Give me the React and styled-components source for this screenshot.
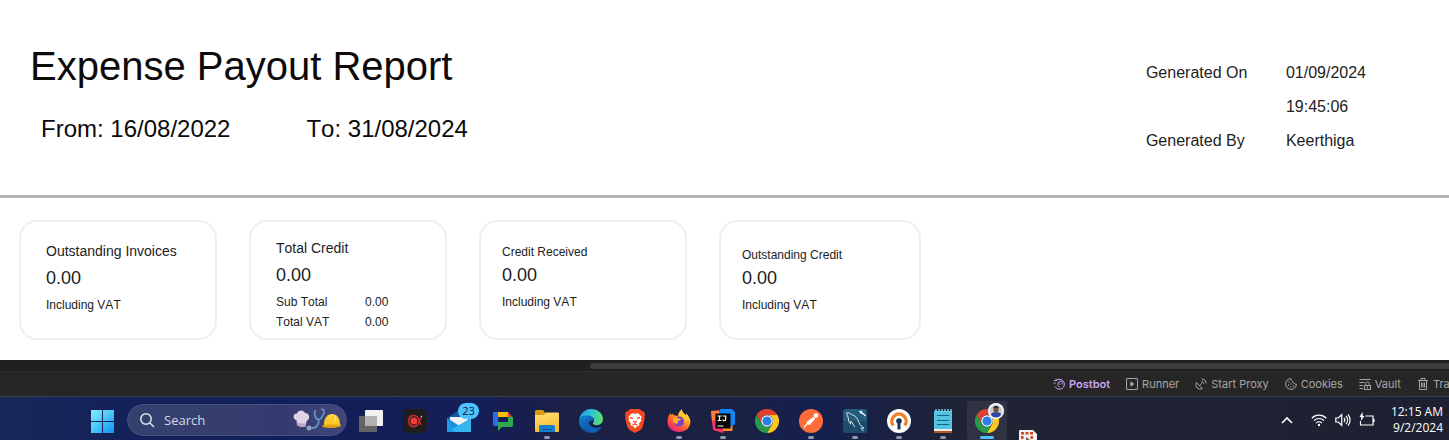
import React from 'react'
import styled, { createGlobalStyle } from 'styled-components';

const cards = [
  { title: 'Outstanding Invoices', value: '0.00', note: 'Including VAT', width: 198, top: 19, left: 25 },
  { title: 'Total Credit', value: '0.00', width: 198, top: 16, left: 25,
    rows: [['Sub Total', '0.00'], ['Total VAT', '0.00']] },
  { title: 'Credit Received', value: '0.00', note: 'Including VAT', width: 208, top: 20, left: 21, compact: true },
  { title: 'Outstanding Credit', value: '0.00', note: 'Including VAT', width: 202, top: 23, left: 21, compact: true },
]

const PostbotIcon = () => (
  <ToolIcon viewBox="0 0 12 12">
    <path d="M3.2 2.4A5 5 0 1 1 2 8.6M.8 2.2l2.4.4M.6 5h2M2.6.8l1.5 1.4M5 5.2a3 3 0 0 1 5-.8M5 5.2c-.6 1.6 0 3.2 1.6 4M7 5.4l.2 1.4M9.2 5l.2 1.4" />
  </ToolIcon>
)

const RunnerIcon = () => (
  <ToolIcon viewBox="0 0 12 12">
    <rect x="0.5" y="0.5" width="11" height="11" rx="0.5" />
    <path d="M4.8 4v4l3-2z" fill="currentColor" />
  </ToolIcon>
)

const ProxyIcon = () => (
  <ToolIcon viewBox="0 0 12 12">
    <path d="M1.4 4.6a4.4 4.4 0 0 0 6 6zM4.4 7.6l2.4-2.4M6.4 3.4a2.4 2.4 0 0 1 2.2 2.2M6.6.8a5 5 0 0 1 4.6 4.6" />
  </ToolIcon>
)

const CookieIcon = () => (
  <ToolIcon viewBox="0 0 12 12">
    <path d="M6 .6a5.4 5.4 0 1 0 5.4 5.6c-1 .2-1.8-.4-2-1.2-1.2.2-2-.6-1.8-1.8C6.4 2.8 5.8 1.8 6 .6z" />
    <path d="M3.6 4h1M3 7h1M5.6 6h1M5.4 9h1M8 8h1" strokeWidth="1.4" />
  </ToolIcon>
)

const VaultIcon = () => (
  <ToolIcon viewBox="0 0 12 12">
    <path d="M.5 1.5h11M.5 4.5h5M.5 7.5h3.5M.5 10.5h3.5" />
    <rect x="5.5" y="7.5" width="6" height="4" />
    <path d="M6.8 7V5.600a1.700 1.700 0 0 1 3.400 0V7M8.500 8.500v2" />
  </ToolIcon>
)

const TrashIcon = () => (
  <ToolIcon viewBox="0 0 12 12">
    <path d="M1 2.500h10M4 2.500v-2h4v2M2.500 2.500v9h7v-9M4.500 4.500v5M6 4.500v5M7.500 4.500v5" />
  </ToolIcon>
)

const tools = [
  { label: 'Postbot', icon: <PostbotIcon />, accent: true },
  { label: 'Runner', icon: <RunnerIcon /> },
  { label: 'Start Proxy', icon: <ProxyIcon /> },
  { label: 'Cookies', icon: <CookieIcon /> },
  { label: 'Vault', icon: <VaultIcon /> },
  { label: 'Trash', icon: <TrashIcon /> },
]

const WindowsLogo = () => (
  <AppIcon viewBox="0 0 24 24">
    <defs>
      <linearGradient id="win" x1="0" y1="0" x2="24" y2="24" gradientUnits="userSpaceOnUse">
        <stop offset="0" stopColor="#8cf0fd" />
        <stop offset="0.5" stopColor="#4cc8f8" />
        <stop offset="1" stopColor="#0a92f5" />
      </linearGradient>
    </defs>
    <path fill="url(#win)" d="M1 1h11v11H1zM13 1h11v11H13zM1 13h11v11H1zM13 13h11v11H13z" />
  </AppIcon>
)

const TaskViewIcon = () => (
  <AppIcon viewBox="0 0 24 24">
    <rect x="0" y="7" width="18" height="16" rx="1" fill="#636466" />
    <rect x="6" y="1" width="18" height="16" rx="1" fill="#f1f1f1" />
    <path d="M6 7h12v10H7a1 1 0 0 1-1-1z" fill="#b2b2b3" />
  </AppIcon>
)

const RecorderIcon = () => (
  <AppIcon viewBox="0 0 24 24">
    <rect width="24" height="24" rx="4.5" fill="#1d1d1f" />
    <path d="M4 14.500c2 3 5.500 4.500 9 3.500M4 9.500C6 6.500 9 5.500 12 6.200" stroke="#8c2323" fill="none" />
    <circle cx="11" cy="12" r="5.300" fill="none" stroke="#e5322f" strokeWidth="1.300" />
    <circle cx="11" cy="12" r="3.500" fill="#f03b38" />
    <path d="M18.500 8.500c-2.500 2-2.500 5 0 7.500" fill="none" stroke="#d92f2d" strokeWidth="1.300" />
    <circle cx="18.500" cy="7.500" r="0.800" fill="#ddd" />
  </AppIcon>
)

const MailIcon = () => (
  <AppIcon viewBox="0 0 24 24">
    <path d="M0 9l12-8 12 8v5H0z" fill="#0c59a4" />
    <path d="M3 8h18v6l-9 5-9-5z" fill="#f1f3f5" />
    <path d="M0 9l15 9.500L24 23H0z" fill="#1a8fe0" />
    <path d="M24 9v14L0 23z" fill="#35b5f0" />
    <path d="M0 9v14h7z" fill="#1f9be6" />
  </AppIcon>
)

const ChatIcon = () => (
  <AppIcon viewBox="0 0 24 24">
    <path d="M3 3h4v14H4a2 2 0 0 1-2-2V4a1 1 0 0 1 1-1z" fill="#2b6de8" />
    <path d="M7 3h10v5H7z" fill="#fbbc04" />
    <path d="M17 3l4.500 5H17z" fill="#ea4335" />
    <path d="M17 8h5v8a2 2 0 0 1-2 2h-9l-4 4v-9h10z" fill="#2fa84f" />
  </AppIcon>
)

const ExplorerIcon = () => (
  <AppIcon viewBox="0 0 24 24">
    <defs>
      <linearGradient id="folder" x1="0" y1="0" x2="0.300" y2="1">
        <stop offset="0" stopColor="#ffe079" />
        <stop offset="1" stopColor="#f9bd2f" />
      </linearGradient>
    </defs>
    <path d="M0 2.500A1.500 1.500 0 0 1 1.500 1H8l2.500 3H22v6H0z" fill="#dc9a10" />
    <path d="M0 6h9l2-2.500h12a1 1 0 0 1 1 1V22a1 1 0 0 1-1 1H1a1 1 0 0 1-1-1z" fill="url(#folder)" />
    <path d="M4 23v-5.500A1.500 1.500 0 0 1 5.500 16h13a1.500 1.500 0 0 1 1.500 1.500V23z" fill="#1680d0" />
    <path d="M7.500 20h9v1.200h-9z" fill="#0c5a9c" />
  </AppIcon>
)

const EdgeIcon = () => (
  <AppIcon viewBox="0 0 24 24">
    <defs>
      <linearGradient id="edgeTop" x1="0" y1="0.300" x2="1" y2="0.500">
        <stop offset="0" stopColor="#1b9de2" />
        <stop offset="0.500" stopColor="#32c3d6" />
        <stop offset="1" stopColor="#5fdd69" />
      </linearGradient>
      <linearGradient id="edgeBody" x1="0" y1="0" x2="0.500" y2="1">
        <stop offset="0" stopColor="#1385d8" />
        <stop offset="1" stopColor="#0b4a9c" />
      </linearGradient>
    </defs>
    <path d="M.2 10.500C1 4.500 6 0 12 0c7 0 12 4.800 12 10 0 4-3 6.200-6.300 6.200-2.500 0-3.900-.9-3.900-1.900 0-.7 1.200-1.200 1.200-3C15 8.500 12 6.800 8.500 6.800 4.500 6.800 1.500 8.500.2 10.500z" fill="url(#edgeTop)" />
    <path d="M.1 11.500C.5 8 4.500 6.600 8.500 6.800c3.500.2 6.400 2 6.500 4.500-3-.6-5.700 1.200-5.700 4.400 0 4.300 4.200 7.300 9.200 6C16 23.400 14 24 12 24 5.400 24-.4 18.600.1 11.500z" fill="url(#edgeBody)" />
    <path d="M8.800 9.500c-2.800 1.600-3.300 4.500-2.800 7.200.9 4.200 4.500 6.900 8.500 7 3-.4 6-2.200 7.800-5.200.3-.6-.2-1-.8-.7-4.500 2.200-10.500.3-11.500-3.600-.5-1.900.2-3.500 1.400-4.700z" fill="#125fb7" />
  </AppIcon>
)

const BraveIcon = () => (
  <AppIcon viewBox="0 0 24 24">
    <path d="M7 0h10l2.200 2.500 1.500-.2 1.300 3-.6 2 .4 2-2.300 9.200-2.500 2.800L12 24l-5-2.700-2.500-2.800L2.200 9.300l.4-2-.6-2 1.300-3 1.500.2z" fill="#f4481e" />
    <path d="M12 4.800l3-.5 3.500 3.300-.6 2.800.6 1-2.500 3.100.5 1.800-2.500.9L12 19.500l-2-2.300-2.500-.9.500-1.800-2.500-3.100.6-1-.6-2.800L9 4.300z" fill="#fff" />
    <path d="M7 8.500l3 .8M17 8.500l-3 .8M10.200 12L12 13.200l1.800-1.200M12 13v2M9.500 16l2.500-1.200 2.500 1.200" stroke="#f4481e" strokeWidth="1.300" fill="none" />
  </AppIcon>
)

const FirefoxIcon = () => (
  <AppIcon viewBox="0 0 24 24">
    <defs>
      <linearGradient id="fox" x1="0.850" y1="0.050" x2="0.250" y2="1">
        <stop offset="0" stopColor="#fff04a" />
        <stop offset="0.350" stopColor="#ffae24" />
        <stop offset="0.650" stopColor="#ff5638" />
        <stop offset="1" stopColor="#e51f81" />
      </linearGradient>
    </defs>
    <path d="M2.500 5.500l1-1.500.5 2 2-1.600.4 1.800c1.600-.2 3 .1 4.400 1C11.200 4 13.500 1 15 .3c0 3 2 4 3.700 5.700l.6-1.600C22 7 23.500 10 23.400 13 23 19.600 18 23 12 23 5.500 23 .5 19 .5 12.800.4 9.500 1.500 7 2.500 5.500z" fill="url(#fox)" />
    <circle cx="12" cy="12.500" r="5" fill="#7543c7" />
    <path d="M6 10c2-2 4.200-1.700 5.800-.5l2.200.5c-.5 1.500-2.500 1.500-3 2-.8.8-.3 1.700.5 2.200-2 1.200-4.500 0-5.500-1.700z" fill="#ffac29" />
    <path d="M13.500 6c3.500 1 5.500 4.500 4.500 8 2-1.500 2.500-5 1-7.500z" fill="#ffd43a" opacity="0.600" />
  </AppIcon>
)

const IdeaIcon = () => (
  <AppIcon viewBox="0 0 24 24">
    <path d="M0 2l8-.5L14 6v12l-2 6-10-3z" fill="#fd3365" />
    <path d="M0 2l8-.5 1 8L1 12z" fill="#ff7d3c" />
    <path d="M9 0h12l3 3v12l-7 5L8 6z" fill="#1385f5" />
    <path d="M12 17h9.500v5H12z" fill="#ff8a31" />
    <path d="M4.500 4.500h15v15h-15z" fill="#050505" />
    <path d="M6.500 7h4M6.500 11.500h4M8.500 7v4.500M11.500 7h3.200v3a1.500 1.500 0 0 1-3 .5M6.500 17h6" stroke="#fff" strokeWidth="1.200" fill="none" />
  </AppIcon>
)

const ChromeIcon = () => (
  <AppIcon viewBox="0 0 24 24">
    <path d="M1.600 6A12 12 0 0 1 22.400 6H12A6 6 0 0 0 6.800 15z" fill="#e0402f" />
    <path d="M22.400 6A12 12 0 0 1 12 24l5.200-9A6 6 0 0 0 12 6z" fill="#fcc81f" />
    <path d="M12 24A12 12 0 0 1 1.600 6l5.200 9a6 6 0 0 0 10.400 0z" fill="#279a4a" />
    <circle cx="12" cy="12" r="5.800" fill="#fff" />
    <circle cx="12" cy="12" r="4.600" fill="#2b7de9" />
  </AppIcon>
)

const PostmanIcon = () => (
  <AppIcon viewBox="0 0 24 24">
    <circle cx="12" cy="12" r="12" fill="#ff6c37" />
    <circle cx="17" cy="6.500" r="2.300" fill="#fff" />
    <path d="M14.300 7.700l2 2-5.500 6-2.500-.4-.8-2z" fill="#fff" />
    <path d="M8.500 14.500L5 18.500M14 11l-4 4.500" stroke="#fff" strokeWidth="1.200" />
  </AppIcon>
)

const WorkbenchIcon = () => (
  <AppIcon viewBox="0 0 24 24">
    <rect width="24" height="24" rx="2.500" fill="#255c7c" />
    <path d="M0 12h24v9.500a2.500 2.500 0 0 1-2.500 2.500h-19A2.500 2.500 0 0 1 0 21.500z" fill="#1c4c69" />
    <path d="M3.500 4c2-1 3.500.5 5 1.500 4 1 6 4 7.500 8 .8 2.500 2.500 4 5 5.500l-3 .2 2.500 3M3.500 4c.2 2 1.500 3 1.800 5 .3 2.500.5 5 2.200 6l.5-3c1.500 2 2 4 4 6" fill="none" stroke="#d7e5ed" strokeWidth="1" />
    <path d="M16.500 2l1.500 2 2 .5 2.500 2.500M18 4l1-2" stroke="#fff" strokeWidth="1.300" fill="none" />
  </AppIcon>
)

const VpnIcon = () => (
  <AppIcon viewBox="0 0 24 24">
    <circle cx="12" cy="12" r="12" fill="#fff" />
    <path d="M6.200 16.500A7.200 7.200 0 1 1 17.800 16.500" fill="none" stroke="#ee8027" strokeWidth="3.400" />
    <circle cx="12" cy="12" r="2.800" fill="#19335c" />
    <path d="M10.500 13h3v7.500h-3z" fill="#19335c" />
  </AppIcon>
)

const NotepadIcon = () => (
  <AppIcon viewBox="0 0 24 24">
    <path d="M3 20h18v3a1 1 0 0 1-1 1H4a1 1 0 0 1-1-1z" fill="#b5541c" />
    <path d="M3 19.500h18V22H3z" fill="#f1eee9" />
    <path d="M3 2h18v18H3z" fill="#55c3df" />
    <path d="M5 0v3M8 0v3M11 0v3M14 0v3M17 0v3M20 0v3" stroke="#7cdcf1" strokeWidth="1.300" />
    <path d="M6 6.500h12M6 11.500h12M6 15.500h12" stroke="#0f6584" strokeWidth="1.200" />
  </AppIcon>
)

const Avatar = () => (
  <AvatarIcon viewBox="0 0 16 16">
    <circle cx="8" cy="8" r="8" fill="#fff" />
    <circle cx="8" cy="8" r="6.500" fill="#c6cbd6" />
    <path d="M2.600 11.500C4 9.500 6 9.300 8 9.300s4 .2 5.400 2.200A6.500 6.500 0 0 1 8 14.500a6.500 6.500 0 0 1-5.400-3z" fill="#2747a5" />
    <ellipse cx="8" cy="6.500" rx="2.600" ry="3.300" fill="#7b4f3c" />
    <path d="M5.200 5.500C5 2 11 2 10.800 5.500 9.500 4.300 6.500 4.300 5.200 5.500z" fill="#17141a" />
  </AvatarIcon>
)

const SearchArt = () => (
  <Art viewBox="0 0 48 24">
    <path d="M4 17l-.5-5C-.5 11.500-.5 5.500 4 5.500 5 1.500 11 1.500 12 5c5 0 5.500 6.500 1.500 8l-.5 5c-3 1.500-6.500 1-9-1z" fill="#e0d3e7" />
    <path d="M4 17l-.3-3c3 1.500 6.500 2 9.500 1l-.3 3c-3 1.500-6.400 1-8.900-1z" fill="#b9a6cb" />
    <path d="M23 2.500c-2 .5-1.500 3-1 5s2 4 3.800 4.300C28.500 11 31 6 31 3.500 31 1.500 29.500 1 28 1.500M25.800 12c0 5-2.500 8.500-8 8" fill="none" stroke="#6298c8" strokeWidth="1.700" />
    <circle cx="16" cy="20" r="2.500" fill="#8aa2b2" />
    <path d="M31 17C31 10 34 6 39 6c5 0 8 4 8 10.500l1 1.300c-1.500 1.700-14.500 2.200-18.500 1z" fill="#fbc82c" />
    <path d="M29.500 17.500c5-1.500 13-1.300 18.500 0-1 2.500-15 3-18.500 1.300z" fill="#e2a20e" />
    <path d="M36.500 10c.5-2.500 1.500-3 3-3.200M41 7c1.500 2 2 4 2 7" stroke="#ffe46c" strokeWidth="1.300" fill="none" />
  </Art>
)

const apps = [
  { name: 'Task view', icon: <TaskViewIcon /> },
  { name: 'Recorder', icon: <RecorderIcon /> },
  { name: 'Mail', icon: <MailIcon />, badge: '23' },
  { name: 'Chat', icon: <ChatIcon /> },
  { name: 'File Explorer', icon: <ExplorerIcon />, open: true },
  { name: 'Edge', icon: <EdgeIcon /> },
  { name: 'Brave', icon: <BraveIcon /> },
  { name: 'Firefox', icon: <FirefoxIcon />, open: true },
  { name: 'IntelliJ IDEA', icon: <IdeaIcon />, open: true },
  { name: 'Chrome', icon: <ChromeIcon /> },
  { name: 'Postman', icon: <PostmanIcon />, open: true },
  { name: 'MySQL Workbench', icon: <WorkbenchIcon />, open: true },
  { name: 'OpenVPN', icon: <VpnIcon />, open: true },
  { name: 'Notepad', icon: <NotepadIcon />, open: true },
  { name: 'Chrome profile', icon: <ChromeIcon />, open: true, active: true },
]

const Card = ({ title, value, note, rows, width, top, left, compact }) => (
  <CardWrapper $width={width} $top={top} $left={left}>
    <CardTitle $compact={compact}>{title}</CardTitle>
    <CardValue>{value}</CardValue>
    {note && <CardNote>{note}</CardNote>}
    {rows && (
      <Breakdown>
        {rows.map(([name, amount]) => (
          <React.Fragment key={name}>
            <dt>{name}</dt>
            <dd>{amount}</dd>
          </React.Fragment>
        ))}
      </Breakdown>
    )}
  </CardWrapper>
)

export default function App() {
  return (
    <>
      <GlobalStyle />
      <Report>
        <Header>
          <Heading>
            <Title>Expense Payout Report</Title>
            <Period>
              <span>From: 16/08/2022</span>
              <span>To: 31/08/2024</span>
            </Period>
          </Heading>
          <Meta>
            <dt>Generated On</dt>
            <dd>01/09/2024<br />19:45:06</dd>
            <dt>Generated By</dt>
            <dd>Keerthiga</dd>
          </Meta>
        </Header>
        <Cards>
          {cards.map(card => <Card key={card.title} {...card} />)}
        </Cards>
      </Report>
      <ScrollTrack><ScrollThumb /></ScrollTrack>
      <StatusBar>
        <Tools>
          {tools.map(({ label, icon, accent }) => (
            <Tool key={label} type="button" $accent={accent}>{icon}{label}</Tool>
          ))}
        </Tools>
      </StatusBar>
      <Taskbar>
        <AppButton type="button" aria-label="Start"><WindowsLogo /></AppButton>
        <SearchBox>
          <SearchGlyph viewBox="0 0 16 16">
            <circle cx="7" cy="7" r="5.200" />
            <path d="M11 11l4 4" />
          </SearchGlyph>
          <input type="text" placeholder="Search" aria-label="Search" />
          <SearchArt />
        </SearchBox>
        {apps.map(({ name, icon, badge, open, active }) => (
          <AppButton key={name} type="button" aria-label={name} $active={active}>
            {icon}
            {badge && <Badge>{badge}</Badge>}
            {active && <Avatar />}
            {open && <Indicator $active={active} />}
          </AppButton>
        ))}
        <SnipIcon viewBox="0 0 18 10">
          <path d="M0 1a1 1 0 0 1 1-1h13l4 4v6H0z" fill="#f2f2f2" />
          <path d="M2 2h3v2.500H2zM6.500 2h3v2.500h-3zM11 2h3v2.500h-3zM2 6h2.500v3H2zM11.500 6H14v3h-2.500z" fill="#d8431f" />
          <path d="M7 7l4 3H7z" fill="#666" />
        </SnipIcon>
        <Tray>
          <TrayButton type="button" aria-label="Hidden icons">
            <TrayIcon viewBox="0 0 16 16"><path d="M3 11l5-5 5 5" strokeWidth="1.600" /></TrayIcon>
          </TrayButton>
          <TrayGroup>
            <TrayIcon viewBox="0 0 16 16">
              <path d="M.8 6.200a10.200 10.200 0 0 1 14.400 0M3 8.600a7 7 0 0 1 10 0M5.200 11a4 4 0 0 1 5.600 0" />
              <circle cx="8" cy="13" r="1.200" fill="#fff" stroke="none" />
            </TrayIcon>
            <TrayIcon viewBox="0 0 16 16">
              <path d="M.8 6h2.400l3.500-3.300v10.600L3.200 10H.8zM9 6a3 3 0 0 1 0 4M11 4a6 6 0 0 1 0 8M13 2.300a9 9 0 0 1 0 11.400" />
            </TrayIcon>
            <TrayIcon viewBox="0 0 16 16">
              <path d="M6.500 4H14v9H1.500V9M15 7v3" />
              <path d="M3.500 0L.5 5h1.800L1.800 9 5.500 4H3.800z" fill="#fff" stroke="none" />
            </TrayIcon>
          </TrayGroup>
          <Clock>
            <span>12:15 AM</span>
            <span>9/2/2024</span>
          </Clock>
        </Tray>
      </Taskbar>
    </>
  )
}

const GlobalStyle = createGlobalStyle`
  * {
    box-sizing: border-box;
  }
  body {
    margin: 0;
    background: #fff;
    font-family: "Liberation Sans", Arial, sans-serif;
  }
  h1, h2, p, dl, dd {
    margin: 0;
  }
  button, input {
    padding: 0;
    border: none;
    background: none;
    font-family: inherit;
  }
`;

const Report = styled.main`
  background: #fff;
  color: #0c0a0a;
  font-kerning: none;
`;

const Header = styled.header`
  display: flex;
  justify-content: space-between;
  padding: 42px 83px 0 30px;
  border-bottom: 3px solid #b3b3b3;
`;

const Heading = styled.div`
  padding-bottom: 51px;
`;

const Title = styled.h1`
  font-size: 40px;
  line-height: 48px;
  font-weight: 400;
`;

const Period = styled.div`
  display: flex;
  gap: 76px;
  margin-top: 24px;
  padding-left: 11px;
  font-size: 24px;
  line-height: 30px;
`;

const Meta = styled.dl`
  display: grid;
  grid-template-columns: 140px auto;
  align-content: start;
  padding-top: 14px;
  font-size: 16px;
  line-height: 34px;
  color: #222;
`;

const Cards = styled.section`
  display: flex;
  gap: 32px;
  padding: 22px 19px 20px;
`;

const CardWrapper = styled.article`
  width: ${props => props.$width}px;
  height: 120px;
  padding: ${props => props.$top}px 16px 0 ${props => props.$left}px;
  border: 2px solid #e9f1f4;
  border-radius: 18px;
  color: #222;
`;

const CardTitle = styled.h2`
  margin-bottom: ${props => props.$compact ? 1 : 5}px;
  font-size: ${props => props.$compact ? 12 : 14}px;
  line-height: 20px;
  font-weight: 400;
`;

const CardValue = styled.p`
  margin-bottom: 5px;
  font-size: 18px;
  line-height: 24px;
`;

const CardNote = styled.p`
  font-size: 12px;
  line-height: 20px;
`;

const Breakdown = styled.dl`
  display: grid;
  grid-template-columns: 89px auto;
  font-size: 12px;
  line-height: 20px;
`;

const ScrollTrack = styled.div`
  height: 11px;
  padding: 3px 0 2px 590px;
  background: #1f1f1f;
`;

const ScrollThumb = styled.div`
  height: 6px;
  border-radius: 3px 0 0 3px;
  background: #3d3d3d;
`;

const StatusBar = styled.div`
  display: flex;
  justify-content: flex-end;
  height: 25px;
  border-top: 1px solid #303030;
  background: #262626;
`;

const Tools = styled.div`
  display: flex;
  gap: 16px;
  width: 396px;
  overflow: hidden;
`;

const Tool = styled.button`
  display: flex;
  flex: none;
  align-items: center;
  gap: 4px;
  font-family: Inter, sans-serif;
  font-size: 11px;
  font-weight: ${props => props.$accent ? 600 : 400};
  color: ${props => props.$accent ? '#c8a5f5' : '#a6a6a6'};
`;

const ToolIcon = styled.svg`
  width: 12px;
  height: 12px;
  fill: none;
  stroke: currentColor;
`;

const Taskbar = styled.footer`
  position: relative;
  display: flex;
  height: 44px;
  padding: 0 6px 0 80px;
  border-top: 1px solid #3c414d;
  background: linear-gradient(90deg, #182858 0%, #13205a 10%, #141e58 33%, #1b2046 39%, #1b2140 50%, #14204f 56%, #1a2142 61%, #202435 67%, #1c2030 100%);
  font-family: "Open Sans", "Noto Sans", sans-serif;
  color: #fff;
`;

const AppButton = styled.button`
  position: relative;
  display: flex;
  flex: none;
  align-items: center;
  justify-content: center;
  width: 44px;
  padding-top: 4px;
  ${props => props.$active && `
    background: rgba(255, 255, 255, 0.07);
    background-clip: content-box;
    border-radius: 4px;
    padding: 4px 2px 0;
  `}
`;

const AppIcon = styled.svg`
  width: 24px;
  height: 24px;
`;

const Indicator = styled.span`
  position: absolute;
  bottom: 1px;
  left: 50%;
  width: ${props => props.$active ? 14 : 6}px;
  height: 3px;
  border-radius: 2px;
  background: ${props => props.$active ? '#4cc2ff' : '#9298ab'};
  transform: translateX(-50%);
`;

const Badge = styled.span`
  position: absolute;
  top: 6px;
  left: 21px;
  width: 21px;
  border-radius: 8px;
  background: #4cc2ff;
  font-size: 11px;
  line-height: 16px;
  color: #0b1b2e;
`;

const AvatarIcon = styled.svg`
  position: absolute;
  top: 6px;
  right: 5px;
  width: 16px;
  height: 16px;
`;

const SearchBox = styled.div`
  display: flex;
  align-items: center;
  width: 220px;
  height: 32px;
  margin: 7px 2px 0 3px;
  padding: 0 5px 0 11px;
  border: 1px solid #46517f;
  border-radius: 16px;
  background: linear-gradient(90deg, #344270, #353a6e 70%, #41467a);
  input {
    flex: 1;
    min-width: 0;
    padding-left: 9px;
    font-size: 13px;
    color: #d5d9e5;
    outline: none;
  }
  input::placeholder {
    color: #d5d9e5;
  }
`;

const SearchGlyph = styled.svg`
  width: 16px;
  height: 16px;
  fill: none;
  stroke: #e3e6ee;
  stroke-width: 1.5;
`;

const Art = styled.svg`
  width: 48px;
  height: 24px;
`;

const SnipIcon = styled.svg`
  position: absolute;
  left: 1019px;
  bottom: 0;
  width: 18px;
  height: 10px;
`;

const Tray = styled.div`
  display: flex;
  align-items: center;
  margin-left: auto;
  padding-top: 3px;
`;

const TrayButton = styled.button`
  display: flex;
  margin-right: 16px;
`;

const TrayGroup = styled.div`
  display: flex;
  gap: 8px;
  margin-right: 16px;
`;

const TrayIcon = styled.svg`
  width: 16px;
  height: 16px;
  fill: none;
  stroke: #fff;
  stroke-width: 1.2;
`;

const Clock = styled.time`
  display: flex;
  flex-direction: column;
  align-items: flex-end;
  font-size: 12px;
  line-height: 16px;
`;
